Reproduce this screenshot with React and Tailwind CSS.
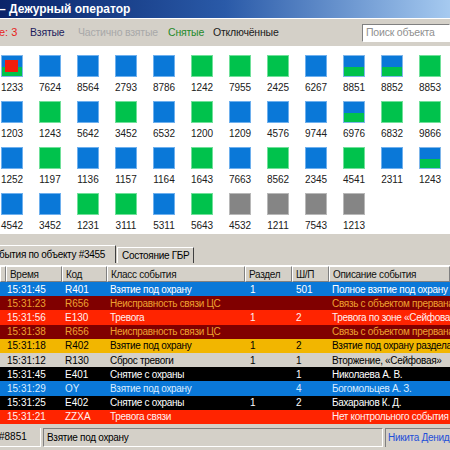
import React from 'react';

const B = 'bg-[#0a78d8]';
const G = 'bg-[#00c24c]';
const Y = 'bg-[#858585]';

// b = blue, g = green, s = split, x = alarm, n = disabled
const tiles = [
  [['1233', 'x'], ['7624', 'b'], ['8564', 'b'], ['2793', 'b'], ['8786', 'b'], ['1242', 'g'], ['7955', 'g'], ['2425', 'g'], ['6267', 'b'], ['8851', 's'], ['8852', 's'], ['8853', 'g']],
  [['1203', 'b'], ['1243', 'g'], ['5642', 'b'], ['3452', 'g'], ['6532', 'b'], ['1200', 'g'], ['1209', 'b'], ['4576', 'b'], ['9744', 'b'], ['6976', 's'], ['6832', 'g'], ['9866', 'g']],
  [['1252', 'b'], ['1197', 'g'], ['1136', 'b'], ['1157', 'b'], ['1164', 'b'], ['1643', 'g'], ['7663', 'b'], ['8562', 'g'], ['2345', 'b'], ['4541', 'g'], ['2311', 'b'], ['1243', 's']],
  [['4542', 'b'], ['3452', 'b'], ['1231', 'g'], ['3111', 'g'], ['5311', 'b'], ['5643', 'g'], ['4532', 'n'], ['1211', 'n'], ['7543', 'n'], ['1213', 'n']],
];

const rowStyles = {
  blue: 'bg-[#0a78d8] text-white',
  maroon: 'bg-[#800000] text-[#eea030]',
  red: 'bg-[#ff2400] text-[#fff0f0]',
  gold: 'bg-[#f2b600] text-black',
  gray: 'bg-[#d4d0c8] text-black',
  black: 'bg-black text-white',
  sky: 'bg-[#0a78d8] text-[#d8ecff]',
};

const events = [
  ['15:31:45', 'R401', 'Взятие под охрану', '1', '501', 'Полное взятие под охрану', 'blue'],
  ['15:31:23', 'R656', 'Неисправность связи ЦС', '', '', 'Связь с объектом прервана', 'maroon'],
  ['15:31:56', 'E130', 'Тревога', '1', '2', 'Тревога по зоне «Сейфовая»', 'red'],
  ['15:31:38', 'R656', 'Неисправность связи ЦС', '', '', 'Связь с объектом прервана', 'maroon'],
  ['15:31:18', 'R402', 'Взятие под охрану', '1', '2', 'Взятие под охрану раздела', 'gold'],
  ['15:31:12', 'R130', 'Сброс тревоги', '1', '1', 'Вторжение, «Сейфовая»', 'gray'],
  ['15:31:45', 'E401', 'Снятие с охраны', '', '1', 'Николаева А. В.', 'black'],
  ['15:31:29', 'OY', 'Взятие под охрану', '', '4', 'Богомольцев А. З.', 'sky'],
  ['15:31:25', 'E402', 'Снятие с охраны', '1', '2', 'Бахаранов К. Д.', 'black'],
  ['15:31:21', 'ZZXA', 'Тревога связи', '', '', 'Нет контрольного события', 'red'],
];

function Tile({ kind }) {
  if (kind === 's' || kind === 'x') {
    return (
      <div className="relative w-[22px] h-[22px] flex flex-col border border-[#7fb6ea]">
        <div className={`h-[11px] ${B}`} />
        <div className={`flex-1 ${G}`} />
        {kind === 'x' && <div className="absolute left-[3px] top-[4px] w-[13px] h-[12px] bg-[#f21c0c]" />}
      </div>
    );
  }
  const c = kind === 'b' ? `${B} border-[#6eb0ee]` : kind === 'g' ? `${G} border-[#70e09a]` : `${Y} border-[#b8b8b8]`;
  return <div className={`w-[22px] h-[22px] border ${c}`} />;
}

function HeadCell({ w, children }) {
  return (
    <div className={`${w} h-full shrink-0 pl-[3px] flex items-center border-t border-l border-white border-r border-b border-r-[#808080] border-b-[#808080] text-[#101010] overflow-hidden whitespace-nowrap`}>
      {children}
    </div>
  );
}

export default function App() {
  return (
    <div className="w-[450px] h-[450px] overflow-hidden bg-[#d4d0c8] flex flex-col text-[10px] tracking-[-0.3px] font-['Liberation_Sans',Arial,sans-serif]">
      {/* title bar */}
      <div className="h-[18px] shrink-0 bg-gradient-to-r from-[#0a246a] via-[#2a5aa8] to-[#a6caf0] flex items-center">
        <span className="text-white font-bold text-[12px] tracking-normal leading-none -ml-[1px]">– Дежурный оператор</span>
      </div>

      {/* filter bar */}
      <div className="h-[28px] shrink-0 flex items-center border-t border-white text-[10.5px] tracking-[-0.2px]">
        <span className="text-[#e8231c] -ml-[1px] w-[31px] text-[11px] tracking-normal">е: 3</span>
        <span className="text-[#1c1c5c] w-[48px]">Взятые</span>
        <span className="text-[#a8a8a8] w-[90px]">Частично взятые</span>
        <span className="text-[#1f8a2a] w-[45px]">Снятые</span>
        <span className="text-[#202020]">Отключённые</span>
        <div className="ml-auto w-[88px] h-[18px] bg-white border-t border-l border-[#808080] border-r border-b border-r-white border-b-white flex items-center pl-[3px] text-[#909090] whitespace-nowrap">
          Поиск объекта
        </div>
      </div>

      {/* object tiles */}
      <div className="h-[188px] shrink-0 bg-white pt-[9px] pl-[1px] flex flex-col gap-y-[7px]">
        {tiles.map((row, i) => (
          <div key={i} className="flex gap-x-[16px]">
            {row.map(([num, kind], j) => (
              <div key={j} className="w-[22px] flex flex-col items-center">
                <Tile kind={kind} />
                <span className="mt-[4px] leading-[13px] text-[10px] tracking-normal text-[#202020] whitespace-nowrap">{num}</span>
              </div>
            ))}
          </div>
        ))}
      </div>

      {/* tabs */}
      <div className="h-[31px] shrink-0 flex items-end pb-[2px]">
        <div className="h-[18px] w-[116px] bg-[#d4d0c8] border-t border-r border-t-white border-r-[#404040] flex items-center text-black whitespace-nowrap overflow-hidden">
          <span className="-ml-[1px]">бытия по объекту #3455</span>
        </div>
        <div className="h-[16px] ml-[1px] px-[4px] border-t border-l border-r border-t-white border-l-white border-r-[#404040] flex items-center text-black">
          Состояние ГБР
        </div>
      </div>

      {/* events table */}
      <div className="flex-1 flex flex-col border-t border-white">
        <div className="h-[16px] shrink-0 flex">
          <HeadCell w="w-[6px]" />
          <HeadCell w="w-[56px]">Время</HeadCell>
          <HeadCell w="w-[45px]">Код</HeadCell>
          <HeadCell w="w-[138px]">Класс события</HeadCell>
          <HeadCell w="w-[47px]">Раздел</HeadCell>
          <HeadCell w="w-[37px]">Ш/П</HeadCell>
          <HeadCell w="flex-1">Описание события</HeadCell>
        </div>
        {events.map(([time, code, cls, part, zone, desc, tone], i) => (
          <div key={i} className={`h-[14.2px] shrink-0 flex items-center whitespace-nowrap overflow-hidden ${rowStyles[tone]}`}>
            <span className="w-[62px] shrink-0 pl-[7px] tracking-normal">{time}</span>
            <span className="w-[45px] shrink-0 pl-[3px] tracking-normal">{code}</span>
            <span className="w-[138px] shrink-0 pl-[3px]">{cls}</span>
            <span className="w-[47px] shrink-0 pl-[5px]">{part}</span>
            <span className="w-[37px] shrink-0 pl-[4px] tracking-normal">{zone}</span>
            <span className="pl-[3px]">{desc}</span>
          </div>
        ))}

        {/* status bar */}
        <div className="flex-1 flex items-center gap-[2px] pt-[3px] pb-[2px]">
          <div className="h-[19px] w-[41px] flex items-center border-b border-r border-b-white border-r-white text-black overflow-hidden tracking-normal">
            <span className="-ml-[1px]">#8851</span>
          </div>
          <div className="h-[19px] flex-1 pl-[3px] flex items-center border-t border-l border-[#808080] border-b border-r border-b-white border-r-white text-black">
            Взятие под охрану
          </div>
          <div className="h-[19px] w-[65px] pl-[2px] flex items-center border-t border-l border-[#808080] border-b-white text-[#1f4fd8] whitespace-nowrap overflow-hidden">
            Никита Денидов
          </div>
        </div>
      </div>
    </div>
  );
}
